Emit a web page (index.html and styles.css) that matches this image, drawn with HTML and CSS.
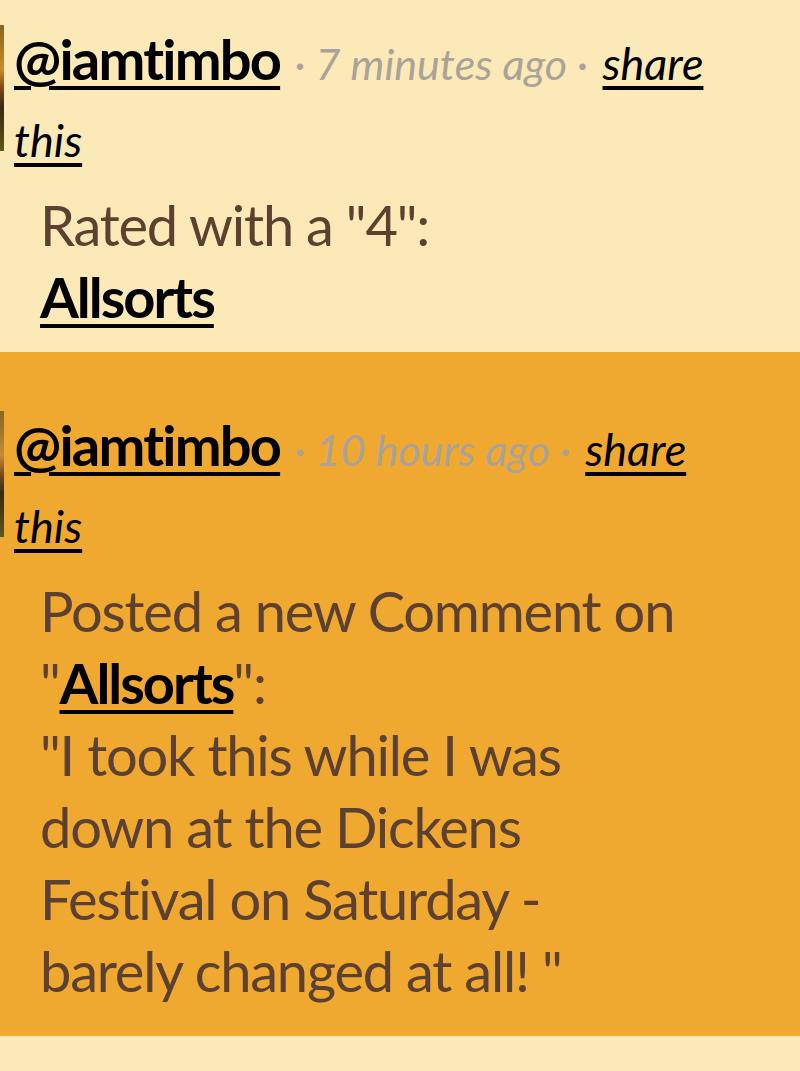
FILE: index.html
```html
<!DOCTYPE html>
<html lang="en">
<head>
    <meta charset="UTF-8">
    <meta name="viewport" content="width=device-width, initial-scale=1.0">
    <link rel="stylesheet" href="styles.css">
    <title>Activity</title>
</head>
<body>
    <div class="feed">

        <div class="item">
            <div class="avatar"></div>
            <div class="entry">
                <div class="byline">
                    <a href="#" class="user">@iamtimbo</a>
                    <span class="meta">&middot; 7 minutes ago &middot;</span>
                    <a href="#" class="share">share this</a>
                </div>
                <div class="body">
                    Rated with a "4":<br>
                    <a href="#">Allsorts</a>
                </div>
            </div>
        </div>

        <div class="item alt">
            <div class="avatar"></div>
            <div class="entry">
                <div class="byline">
                    <a href="#" class="user">@iamtimbo</a>
                    <span class="meta">&middot; 10 hours ago &middot;</span>
                    <a href="#" class="share">share this</a>
                </div>
                <div class="body">
                    Posted a new Comment on "<a href="#">Allsorts</a>":<br>
                    "I took this while I was down at the Dickens Festival on Saturday - barely changed at all! "
                </div>
            </div>
        </div>

    </div>
</body>
</html>
```

FILE: styles.css
```css
* {
  box-sizing: border-box;
  margin: 0;
  padding: 0;
}

body {
  font-family: Lato, "Open Sans", sans-serif;
  background: #fce9b8;
  color: #5c4030;
}

.feed {
  margin-top: -34px;
}

.item {
  display: flex;
  gap: 10px;
  padding: 57px 95px 19px 0;
}

.item.alt {
  background: #efa830;
  padding-bottom: 29px;
}

.avatar {
  flex: none;
  width: 4px;
  height: 126px;
  margin-top: 2px;
  background: linear-gradient(#8c6420, #a87a28 20%, #c88c30 35%, #7a4a18 50%, #3a2a12 65%, #4a3a14 80%, #5c5a18);
}

.entry {
  flex: 1;
}

.byline {
  font-size: 56px;
  line-height: 72px;
}

a {
  color: #000;
  text-decoration: underline;
  text-decoration-thickness: 4px;
  text-underline-offset: 6px;
}

.user {
  font-weight: 700;
  letter-spacing: -1.8px;
}

.meta {
  font-size: 43px;
  font-style: italic;
  color: #aaa39a;
}

.share {
  font-size: 45px;
  font-style: italic;
}

.body {
  margin: 13px 15px 0 26px;
  font-size: 56px;
  line-height: 72px;
  letter-spacing: -1.2px;
}

.body a {
  font-weight: 700;
  letter-spacing: -2px;
}
```
